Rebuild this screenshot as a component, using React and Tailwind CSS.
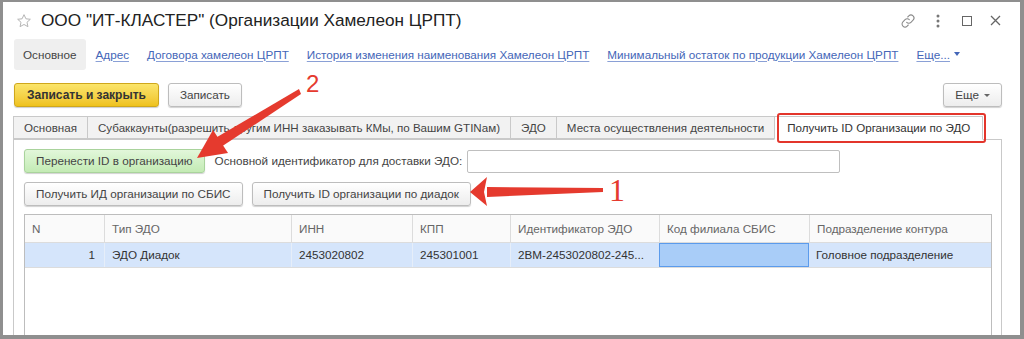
import React from 'react';

const font = { fontFamily: '"Liberation Sans", Arial, sans-serif' };

function Btn({ children, className = '' }) {
  return (
    <div
      className={
        'h-[24px] px-[11px] flex items-center rounded-[3px] border border-[#bdbdbd] bg-linear-to-b from-white to-[#ededed] shadow-[0_1px_1px_rgba(0,0,0,0.18)] text-[11.7px] text-[#444] whitespace-nowrap ' +
        className
      }
    >
      {children}
    </div>
  );
}

function NavLink({ children }) {
  return (
    <span className="text-[11.7px] text-[#4466b8] underline decoration-[#8aa0d6] underline-offset-2 whitespace-nowrap">
      {children}
    </span>
  );
}

const tabs = [
  'Основная',
  'Субаккаунты(разрешить другим ИНН заказывать КМы, по Вашим GTINам)',
  'ЭДО',
  'Места осуществления деятельности',
];

const cols = ['N', 'Тип ЭДО', 'ИНН', 'КПП', 'Идентификатор ЭДО', 'Код филиала СБИС', 'Подразделение контура'];

export default function App() {
  return (
    <div style={font} className="relative w-[1024px] h-[339px] overflow-hidden bg-[#8f8f8f] pl-[3px] pt-[2px] pr-[4px] pb-[4px]">
      <div className="h-full bg-white flex flex-col pl-[11px] pr-[18px] overflow-hidden">
        {/* title */}
        <div className="h-[37px] shrink-0 flex items-center">
          <svg width="16" height="16" viewBox="0 0 24 24" className="ml-[2px] mr-[9px]" fill="none" stroke="#b5b5b5" strokeWidth="1.5" strokeLinejoin="round">
            <path d="M12 2.5l2.9 6.2 6.6.7-5 4.5 1.4 6.6L12 17.2l-5.9 3.3 1.4-6.6-5-4.5 6.6-.7z" />
          </svg>
          <span className="text-[17.2px] text-[#222] whitespace-nowrap">ООО "ИТ-КЛАСТЕР" (Организации Хамелеон ЦРПТ)</span>
          <div className="ml-auto flex items-center text-[#777]">
            <svg width="16" height="16" viewBox="0 0 24 24" fill="none" stroke="#8a8a8a" strokeWidth="1.6" strokeLinecap="round" className="mr-[20px]">
              <path d="M10 14a4.5 4.5 0 0 0 6.4 0l3.2-3.2a4.5 4.5 0 0 0-6.4-6.4L11.6 6" />
              <path d="M14 10a4.5 4.5 0 0 0-6.4 0l-3.2 3.2a4.5 4.5 0 0 0 6.4 6.4l1.6-1.6" />
            </svg>
            <svg width="4" height="14" viewBox="0 0 4 14" className="mr-[22px]">
              <circle cx="2" cy="2" r="1.5" fill="#777" />
              <circle cx="2" cy="7" r="1.5" fill="#777" />
              <circle cx="2" cy="12" r="1.5" fill="#777" />
            </svg>
            <div className="w-[10px] h-[10px] border-[1.5px] border-[#666] mr-[18px]" />
            <svg width="11" height="11" viewBox="0 0 11 11" stroke="#666" strokeWidth="1.3" className="mr-[1px]">
              <path d="M1 1l9 9M10 1l-9 9" />
            </svg>
          </div>
        </div>

        {/* nav */}
        <div className="h-[31px] shrink-0 flex items-center">
          <div className="h-full px-[9px] flex items-center rounded-[3px] bg-[#efefef] text-[11.7px] text-[#444]">Основное</div>
          <div className="flex items-center gap-[18px] ml-[10px]">
            <NavLink>Адрес</NavLink>
            <NavLink>Договора хамелеон ЦРПТ</NavLink>
            <NavLink>История изменения наименования Хамелеон ЦРПТ</NavLink>
            <NavLink>Минимальный остаток по продукции Хамелеон ЦРПТ</NavLink>
            <span className="flex items-center gap-[4px]">
              <NavLink>Еще...</NavLink>
              <span className="w-0 h-0 border-l-[3.5px] border-r-[3.5px] border-t-[4px] border-l-transparent border-r-transparent border-t-[#4466b8]" />
            </span>
          </div>
        </div>

        {/* command bar */}
        <div className="mt-[13px] shrink-0 flex items-center">
          <div className="h-[24px] px-[12px] flex items-center rounded-[3px] border border-[#cfa71c] bg-linear-to-b from-[#fbe56a] to-[#efc21a] shadow-[0_1px_1px_rgba(0,0,0,0.2)] text-[12px] font-bold text-[#333] whitespace-nowrap">
            Записать и закрыть
          </div>
          <Btn className="ml-[9px]">Записать</Btn>
          <Btn className="ml-auto px-[8px] gap-[5px]">
            Еще
            <span className="w-0 h-0 border-l-[3px] border-r-[3px] border-t-[3.5px] border-l-transparent border-r-transparent border-t-[#666]" />
          </Btn>
        </div>

        {/* tabs */}
        <div className="mt-[9px] shrink-0 flex items-end -ml-[1px] h-[23px]">
          {tabs.map((t) => (
            <div key={t} className="h-[23px] px-[10px] flex items-center border border-[#c9c9c9] -mr-[1px] bg-[#f2f2f2] text-[11.6px] text-[#444] whitespace-nowrap">
              {t}
            </div>
          ))}
          <div className="relative h-[24px] px-[12px] flex items-center border border-[#c9c9c9] border-b-white bg-white text-[11.6px] text-[#333] whitespace-nowrap -mb-[1px] z-10">
            Получить ID Организации по ЭДО
          </div>
        </div>

        {/* panel */}
        <div className="flex-1 -ml-[1px] border border-[#c9c9c9] border-b-0 pt-[9px] pl-[10px] pr-[9px] flex flex-col min-h-0">
          <div className="flex items-center h-[24px]">
            <div className="h-[24px] px-[11px] flex items-center rounded-[3px] border border-[#a9d39c] bg-linear-to-b from-[#e2f7da] to-[#c3ebb4] shadow-[0_1px_1px_rgba(0,0,0,0.18)] text-[11.7px] text-[#444] whitespace-nowrap">
              Перенести ID в организацию
            </div>
            <span className="ml-[10px] text-[11.7px] text-[#444] whitespace-nowrap">Основной идентификатор для доставки ЭДО:</span>
            <div className="ml-[5px] w-[373px] h-[23px] rounded-[2px] border border-[#bfbfbf] bg-white" />
          </div>
          <div className="flex items-center mt-[9px]">
            <Btn>Получить ИД организации по СБИС</Btn>
            <Btn className="ml-[9px]">Получить ID организации по диадок</Btn>
          </div>
          <div className="mt-[8px] flex-1 border border-[#bdbdbd] border-b-0 text-[11.7px]">
            <div className="grid grid-cols-[79px_187px_121px_98px_149px_150px_1fr] h-[28px] border-b border-[#dcdcdc] bg-[#fafafa] text-[#666]">
              {cols.map((c, i) => (
                <div key={c} className={'flex items-center px-[7px] ' + (i > 0 ? 'border-l border-[#dcdcdc]' : '')}>
                  {c}
                </div>
              ))}
            </div>
            <div className="grid grid-cols-[79px_187px_121px_98px_149px_150px_1fr] h-[25px] border-b border-[#dcdcdc] bg-[#d5e5fb] text-[#333]">
              <div className="flex items-center justify-end pr-[9px]">1</div>
              <div className="flex items-center px-[7px] border-l border-[#e6eef9]">ЭДО Диадок</div>
              <div className="flex items-center px-[7px] border-l border-[#e6eef9]">2453020802</div>
              <div className="flex items-center px-[7px] border-l border-[#e6eef9]">245301001</div>
              <div className="flex items-center px-[7px] border-l border-[#e6eef9]">2BM-2453020802-245...</div>
              <div className="border-[1.5px] border-[#5b9bec] bg-[#a9cdf8]" />
              <div className="flex items-center px-[7px]">Головное подразделение</div>
            </div>
          </div>
        </div>
      </div>

      {/* red highlight around the active tab */}
      <div className="absolute left-[777px] top-[113px] w-[209px] h-[30px] rounded-[3px] border-2 border-[#e3352b] z-20 pointer-events-none" />

      {/* arrows */}
      <svg className="absolute left-0 top-0 z-30 pointer-events-none" width="1024" height="339">
        <polygon points="299,89 301,94 218,149 212,140" fill="#e53a2e" />
        <polygon points="197,158 213,130 228,153" fill="#e53a2e" />
        <polygon points="603,188 603,192 487,197 487,187" fill="#e53a2e" />
        <polygon points="470,192 487,177 484,192 487,206" fill="#e53a2e" />
      </svg>
      <span className="absolute left-[306px] top-[72px] z-30 text-[24px] leading-none text-[#e53a2e]">2</span>
      <span style={{ fontFamily: '"Liberation Serif", serif' }} className="absolute left-[609px] top-[174px] z-30 text-[32px] leading-none text-[#e53a2e]">1</span>
    </div>
  );
}
